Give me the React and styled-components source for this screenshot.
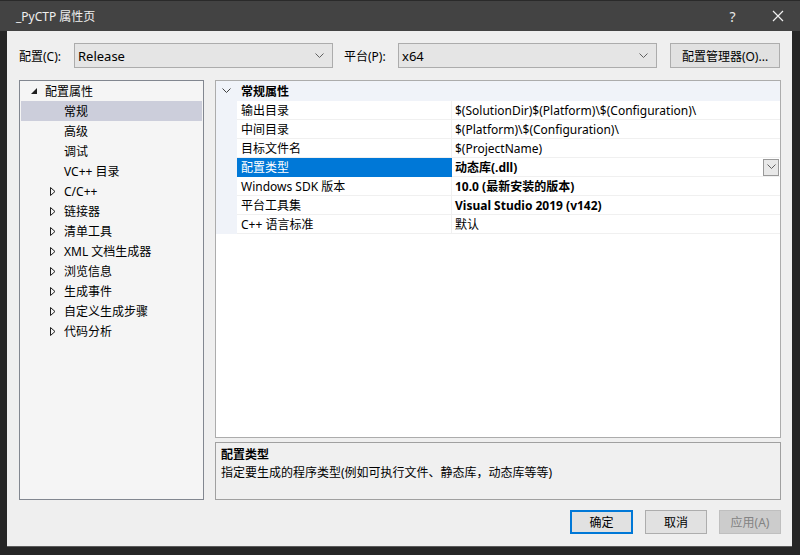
import React from "react";
import styled, { createGlobalStyle, css } from "styled-components";

const GlobalStyle = createGlobalStyle`
  html, body {
    margin: 0;
    padding: 0;
    background: #262626;
  }
  body {
    font-family: "Noto Sans", "Noto Sans CJK SC", sans-serif;
    font-size: 12px;
    color: #000;
  }
`;

const Screen = styled.div`
  width: 800px;
  height: 555px;
  background: #262626;
  display: flex;
  flex-direction: column;
  overflow: hidden;
`;

const TitleBar = styled.div`
  height: 30px;
  border-top: 1px solid #2a2a2a;
  background: #434343;
  color: #f0f0f0;
  display: flex;
  align-items: center;
  padding: 0 0 0 16px;
  flex-shrink: 0;
`;

const Title = styled.div`
  flex: 1;
`;

const TitleButton = styled.div`
  width: 45px;
  height: 30px;
  display: flex;
  align-items: center;
  justify-content: center;
  color: #e8e8e8;
  font-size: 14px;
`;

const Body = styled.div`
  margin: 0 8px 7px 7px;
  height: 516px;
  background: #efefef;
  border-bottom: 1px solid #5b5b5b;
  box-sizing: border-box;
  padding: 12px 11px 13px 12px;
  display: flex;
  flex-direction: column;
`;

const ConfigRow = styled.div`
  display: flex;
  align-items: center;
  height: 25px;
`;

const Label = styled.div`
  width: ${(p) => p.w}px;
  flex-shrink: 0;
`;

const Select = styled.div`
  width: 259px;
  height: 25px;
  box-sizing: border-box;
  border: 1px solid #acacac;
  background: #e5e5e5;
  display: flex;
  align-items: center;
  padding: 0 8px 0 3px;
  font-size: 13px;
  margin-right: ${(p) => p.mr}px;
`;

const SelectText = styled.div`
  flex: 1;
`;

const Button = styled.div`
  width: ${(p) => p.w}px;
  height: ${(p) => p.h || 24}px;
  box-sizing: border-box;
  border: 1px solid #adadad;
  background: #e1e1e1;
  display: flex;
  align-items: center;
  justify-content: center;
  ${(p) =>
    p.primary &&
    css`
      border: 2px solid #0078d7;
    `}
  ${(p) =>
    p.disabled &&
    css`
      background: #cccccc;
      border-color: #bfbfbf;
      color: #838383;
    `}
`;

const Main = styled.div`
  display: flex;
  gap: 11px;
  margin-top: 12px;
  height: 420px;
`;

const Tree = styled.div`
  width: 185px;
  flex-shrink: 0;
  box-sizing: border-box;
  border: 1px solid #828790;
  background: #f5f5f5;
  padding: 0 1px;
`;

const TreeRow = styled.div`
  height: 20px;
  display: flex;
  align-items: center;
  padding-left: ${(p) => p.indent}px;
  background: ${(p) => (p.selected ? "#cccedb" : "transparent")};
`;

const Arrow = styled.div`
  width: 14px;
  height: 20px;
  display: flex;
  align-items: center;
  justify-content: flex-start;
`;

const RightCol = styled.div`
  flex: 1;
  display: flex;
  flex-direction: column;
  gap: 4px;
`;

const Grid = styled.div`
  height: 358px;
  box-sizing: border-box;
  border: 1px solid #acacac;
  background: #fff;
`;

const GroupRow = styled.div`
  height: 20px;
  background: #f0f3f9;
  display: flex;
  align-items: center;
  font-weight: bold;
`;

const GroupTitle = styled.span`
  padding-left: 4px;
`;

const Gutter = styled.div`
  width: 21px;
  align-self: stretch;
  display: flex;
  align-items: center;
  justify-content: center;
  background: #f0f3f9;
  flex-shrink: 0;
`;

const PropRow = styled.div`
  height: 19px;
  display: flex;
`;

const NameCell = styled.div`
  width: 215px;
  box-sizing: border-box;
  padding-left: 4px;
  display: flex;
  align-items: center;
  border-bottom: 1px solid #f0f0f0;
  border-right: 1px solid #f0f0f0;
  ${(p) =>
    p.selected &&
    css`
      background: #0078d7;
      color: #fff;
      border-color: #0078d7;
    `}
`;

const ValueCell = styled.div`
  flex: 1;
  padding-left: 3px;
  display: flex;
  align-items: center;
  border-bottom: 1px solid #f0f0f0;
  font-weight: ${(p) => (p.bold ? "bold" : "normal")};
`;

const ValueText = styled.div`
  flex: 1;
`;

const DropButton = styled.div`
  width: 16px;
  height: 17px;
  box-sizing: border-box;
  border: 1px solid #999;
  background: #e8e8e8;
  display: flex;
  align-items: center;
  justify-content: center;
  margin-right: 1px;
`;

const Description = styled.div`
  height: 58px;
  box-sizing: border-box;
  border: 1px solid #a0a0a0;
  background: #f0f0f0;
  padding: 3px 5px;
  line-height: 18px;
`;

const DescTitle = styled.div`
  font-weight: bold;
`;

const Footer = styled.div`
  display: flex;
  justify-content: flex-end;
  gap: 12px;
  margin-top: 10px;
`;

const Chevron = ({ color = "#606060" }) => (
  <svg width="9" height="6" viewBox="0 0 9 6">
    <path d="M0.5 0.5 L4.5 4.5 L8.5 0.5" fill="none" stroke={color} strokeWidth="1" />
  </svg>
);

const Expanded = () => (
  <svg width="6" height="6" viewBox="0 0 6 6">
    <path d="M6 0 L6 6 L0 6 Z" fill="#1e1e1e" />
  </svg>
);

const Collapsed = () => (
  <svg width="6" height="9" viewBox="0 0 6 9">
    <path d="M0.5 0.5 L5 4.5 L0.5 8.5 Z" fill="none" stroke="#1e1e1e" strokeWidth="1" />
  </svg>
);

const treeItems = [
  { text: "常规", leaf: true, selected: true },
  { text: "高级", leaf: true },
  { text: "调试", leaf: true },
  { text: "VC++ 目录", leaf: true },
  { text: "C/C++" },
  { text: "链接器" },
  { text: "清单工具" },
  { text: "XML 文档生成器" },
  { text: "浏览信息" },
  { text: "生成事件" },
  { text: "自定义生成步骤" },
  { text: "代码分析" },
];

const props = [
  { name: "输出目录", value: "$(SolutionDir)$(Platform)\\$(Configuration)\\" },
  { name: "中间目录", value: "$(Platform)\\$(Configuration)\\" },
  { name: "目标文件名", value: "$(ProjectName)" },
  { name: "配置类型", value: "动态库(.dll)", bold: true, selected: true },
  { name: "Windows SDK 版本", value: "10.0 (最新安装的版本)", bold: true },
  { name: "平台工具集", value: "Visual Studio 2019 (v142)", bold: true },
  { name: "C++ 语言标准", value: "默认" },
];

export default function App() {
  return (
    <Screen>
      <GlobalStyle />
      <TitleBar>
        <Title>_PyCTP 属性页</Title>
        <TitleButton>?</TitleButton>
        <TitleButton>
          <svg width="12" height="12" viewBox="0 0 12 12">
            <path d="M1 1 L11 11 M11 1 L1 11" stroke="#f0f0f0" strokeWidth="1.2" />
          </svg>
        </TitleButton>
      </TitleBar>
      <Body>
        <ConfigRow>
          <Label w={55}>配置(C):</Label>
          <Select mr={11}>
            <SelectText>Release</SelectText>
            <Chevron />
          </Select>
          <Label w={54}>平台(P):</Label>
          <Select mr={13}>
            <SelectText>x64</SelectText>
            <Chevron />
          </Select>
          <Button w={110} h={25}>配置管理器(O)...</Button>
        </ConfigRow>
        <Main>
          <Tree>
            <TreeRow indent={10}>
              <Arrow>
                <Expanded />
              </Arrow>
              配置属性
            </TreeRow>
            {treeItems.map((item) => (
              <TreeRow
                key={item.text}
                indent={item.leaf ? 43 : 29}
                selected={item.selected}
              >
                {!item.leaf && (
                  <Arrow>
                    <Collapsed />
                  </Arrow>
                )}
                {item.text}
              </TreeRow>
            ))}
          </Tree>
          <RightCol>
            <Grid>
              <GroupRow>
                <Gutter>
                  <Chevron color="#404040" />
                </Gutter>
                <GroupTitle>常规属性</GroupTitle>
              </GroupRow>
              {props.map((p) => (
                <PropRow key={p.name}>
                  <Gutter />
                  <NameCell selected={p.selected}>{p.name}</NameCell>
                  <ValueCell bold={p.bold}>
                    <ValueText>{p.value}</ValueText>
                    {p.selected && (
                      <DropButton>
                        <Chevron />
                      </DropButton>
                    )}
                  </ValueCell>
                </PropRow>
              ))}
            </Grid>
            <Description>
              <DescTitle>配置类型</DescTitle>
              <div>指定要生成的程序类型(例如可执行文件、静态库，动态库等等)</div>
            </Description>
          </RightCol>
        </Main>
        <Footer>
          <Button w={63} primary>确定</Button>
          <Button w={62}>取消</Button>
          <Button w={62} disabled>应用(A)</Button>
        </Footer>
      </Body>
    </Screen>
  );
}
